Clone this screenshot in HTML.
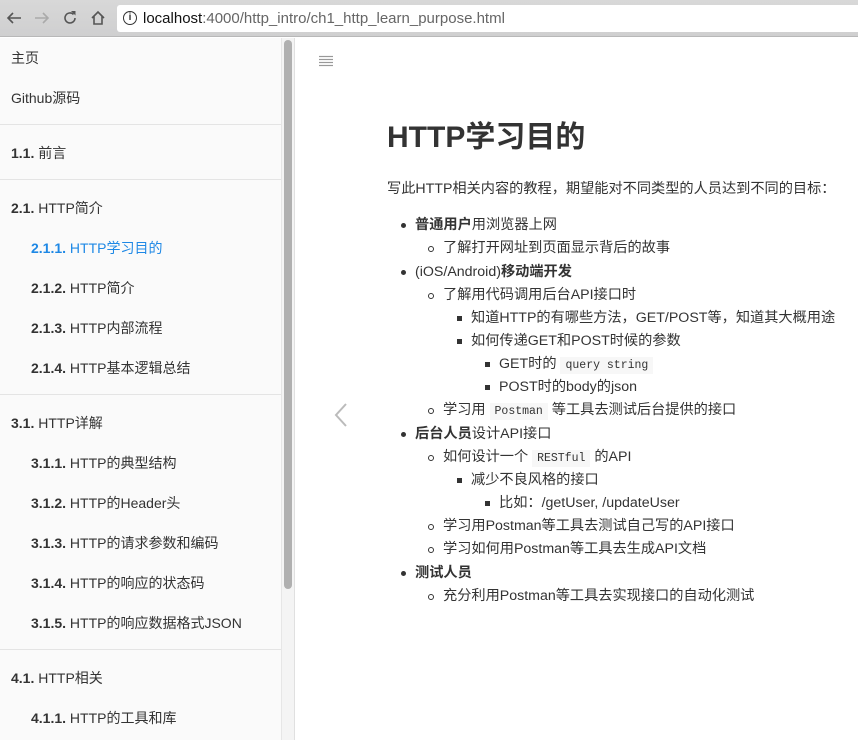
<!DOCTYPE html>
<html><head><meta charset="utf-8"><style>
*{margin:0;padding:0;box-sizing:border-box}
body{width:858px;height:740px;overflow:hidden;font-family:"Liberation Sans","Noto Sans CJK SC",sans-serif;background:#fff;position:relative;color:#333}
.top{position:absolute;left:0;top:0;width:858px;height:37px;background:linear-gradient(#d8d8d8,#cfcfd0);border-bottom:1px solid #b8b8b8}
.url{position:absolute;left:117px;top:5px;width:750px;height:27px;background:#fff;border-radius:3px;font-size:15px;line-height:27px;padding-left:26px;color:#666}
.url b{font-weight:normal;color:#111}
.side{position:absolute;left:0;top:38px;width:281px;height:702px;background:#fafafa}
.side div{position:absolute;font-size:14px;color:#333;white-space:nowrap}
.hr{height:1px;background:#e4e4e4;left:0;width:281px}
.track{position:absolute;left:281px;top:38px;width:14px;height:702px;background:#f4f4f4;border-left:1px solid #e6e6e6;border-right:1px solid #e0e0e0}
.thumb{position:absolute;left:284px;top:40px;width:8px;height:549px;background:#b0b0b0;border-radius:4px}
.main{position:absolute;left:296px;top:38px;width:562px;height:702px;background:#fff}
h1{position:absolute;left:387px;top:112px;font-size:30px;font-weight:bold;color:#333}
.t{position:absolute;font-size:14.2px;color:#333;white-space:nowrap;line-height:20px}
code{font-family:"Liberation Mono",monospace;font-size:11.5px;background:#f7f7f7;padding:2px 5px}
.d{position:absolute;width:5px;height:5px;background:#333;border-radius:50%}
.c{position:absolute;width:6px;height:6px;border:1px solid #333;border-radius:50%}
.q{position:absolute;width:5px;height:5px;background:#333}
</style></head><body>
<div class="top">
<svg style="position:absolute;left:6px;top:11px" width="16" height="14"><path d="M15 7H2M7 2L2 7l5 5" fill="none" stroke="#555" stroke-width="1.6"/></svg>
<svg style="position:absolute;left:34px;top:11px" width="16" height="14"><path d="M1 7h13M9 2l5 5-5 5" fill="none" stroke="#aaa" stroke-width="1.6"/></svg>
<svg style="position:absolute;left:62px;top:10px" width="16" height="16"><path d="M13 8a5 5 0 1 1-1.5-3.6" fill="none" stroke="#555" stroke-width="1.6"/><path d="M9 1h4.5v4.5z" fill="#555"/></svg>
<svg style="position:absolute;left:90px;top:10px" width="16" height="16"><path d="M2 8l6-6 6 6M4 6.5V14h8V6.5" fill="none" stroke="#555" stroke-width="1.6"/></svg>
<div class="url"><span style="position:absolute;left:6px;top:6px;width:14px;height:14px;border:1.5px solid #333;border-radius:50%;font-size:10px;line-height:11px;text-align:center;color:#333;font-weight:bold">i</span><b>localhost</b>:4000/http_intro/ch1_http_learn_purpose.html</div>
</div>
<div class="side">
<div style="left:11px;top:10px">主页</div>
<div style="left:11px;top:50px">Github源码</div>
<div class="hr" style="top:86px"></div>
<div style="left:11px;top:105px"><b>1.1.</b> 前言</div>
<div class="hr" style="top:141px"></div>
<div style="left:11px;top:160px"><b>2.1.</b> HTTP简介</div>
<div style="left:31px;top:200px;color:#1e88e5"><b>2.1.1.</b> HTTP学习目的</div>
<div style="left:31px;top:240px"><b>2.1.2.</b> HTTP简介</div>
<div style="left:31px;top:280px"><b>2.1.3.</b> HTTP内部流程</div>
<div style="left:31px;top:320px"><b>2.1.4.</b> HTTP基本逻辑总结</div>
<div class="hr" style="top:356px"></div>
<div style="left:11px;top:375px"><b>3.1.</b> HTTP详解</div>
<div style="left:31px;top:415px"><b>3.1.1.</b> HTTP的典型结构</div>
<div style="left:31px;top:455px"><b>3.1.2.</b> HTTP的Header头</div>
<div style="left:31px;top:495px"><b>3.1.3.</b> HTTP的请求参数和编码</div>
<div style="left:31px;top:535px"><b>3.1.4.</b> HTTP的响应的状态码</div>
<div style="left:31px;top:575px"><b>3.1.5.</b> HTTP的响应数据格式JSON</div>
<div class="hr" style="top:611px"></div>
<div style="left:11px;top:630px"><b>4.1.</b> HTTP相关</div>
<div style="left:31px;top:670px"><b>4.1.1.</b> HTTP的工具和库</div>
</div>
<div class="track"></div><div class="thumb"></div>
<div class="main"></div>
<svg style="position:absolute;left:318px;top:55px" width="16" height="13"><g stroke="#999" stroke-width="1.2"><line x1="1" y1="1.5" x2="15" y2="1.5"/><line x1="1" y1="4.5" x2="15" y2="4.5"/><line x1="1" y1="7.5" x2="15" y2="7.5"/><line x1="1" y1="10.5" x2="15" y2="10.5"/></g></svg>
<svg style="position:absolute;left:333px;top:402px" width="16" height="26"><polyline points="13,2 3,13 13,24" fill="none" stroke="#bbb" stroke-width="2"/></svg>
<h1>HTTP学习目的</h1>
<div class="t" style="left:387px;top:179px">写此HTTP相关内容的教程，期望能对不同类型的人员达到不同的目标：</div>
<div class="d" style="left:401px;top:223px"></div><div class="t" style="left:415px;top:215px"><b>普通用户</b>用浏览器上网</div>
<div class="c" style="left:428px;top:246px"></div><div class="t" style="left:443px;top:238px">了解打开网址到页面显示背后的故事</div>
<div class="d" style="left:401px;top:270px"></div><div class="t" style="left:415px;top:262px">(iOS/Android)<b>移动端开发</b></div>
<div class="c" style="left:428px;top:293px"></div><div class="t" style="left:443px;top:285px">了解用代码调用后台API接口时</div>
<div class="q" style="left:457px;top:316px"></div><div class="t" style="left:471px;top:308px">知道HTTP的有哪些方法，GET/POST等，知道其大概用途</div>
<div class="q" style="left:457px;top:339px"></div><div class="t" style="left:471px;top:331px">如何传递GET和POST时候的参数</div>
<div class="q" style="left:485px;top:362px"></div><div class="t" style="left:499px;top:354px">GET时的 <code>query string</code></div>
<div class="q" style="left:485px;top:385px"></div><div class="t" style="left:499px;top:377px">POST时的body的json</div>
<div class="c" style="left:428px;top:408px"></div><div class="t" style="left:443px;top:400px">学习用 <code>Postman</code> 等工具去测试后台提供的接口</div>
<div class="d" style="left:401px;top:432px"></div><div class="t" style="left:415px;top:424px"><b>后台人员</b>设计API接口</div>
<div class="c" style="left:428px;top:455px"></div><div class="t" style="left:443px;top:447px">如何设计一个 <code>RESTful</code> 的API</div>
<div class="q" style="left:457px;top:478px"></div><div class="t" style="left:471px;top:470px">减少不良风格的接口</div>
<div class="q" style="left:485px;top:501px"></div><div class="t" style="left:499px;top:493px">比如：/getUser, /updateUser</div>
<div class="c" style="left:428px;top:524px"></div><div class="t" style="left:443px;top:516px">学习用Postman等工具去测试自己写的API接口</div>
<div class="c" style="left:428px;top:547px"></div><div class="t" style="left:443px;top:539px">学习如何用Postman等工具去生成API文档</div>
<div class="d" style="left:401px;top:571px"></div><div class="t" style="left:415px;top:563px"><b>测试人员</b></div>
<div class="c" style="left:428px;top:594px"></div><div class="t" style="left:443px;top:586px">充分利用Postman等工具去实现接口的自动化测试</div>
</body></html>
